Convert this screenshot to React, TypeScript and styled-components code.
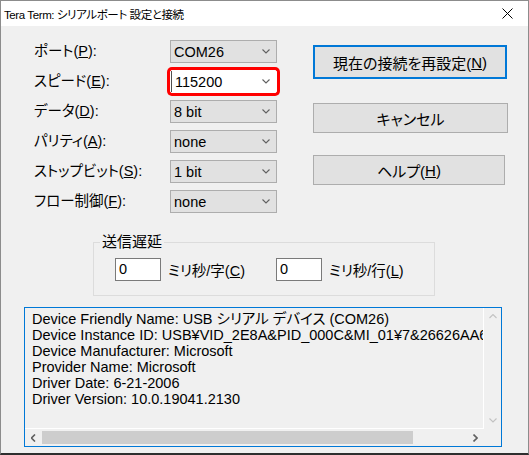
import React from 'react';
import styled, { createGlobalStyle, css } from 'styled-components';

const GlobalStyle = createGlobalStyle`
  html, body { margin: 0; padding: 0; background: #ffffff; }
  body { font-family: "Liberation Sans", "Noto Sans CJK JP", sans-serif; color: #000; }
  * { box-sizing: border-box; }
`;

const Window = styled.div`
  width: 529px;
  height: 455px;
  border: 1px solid #8c8c8c;
  border-bottom: 2px solid #2e2e2e;
  background: #f0f0f0;
  display: flex;
  flex-direction: column;
  overflow: hidden;
`;

const TitleBar = styled.div`
  height: 25px;
  flex: none;
  background: #ffffff;
  display: flex;
  align-items: center;
  justify-content: space-between;
  padding: 0 15px 0 3px;
  font-size: 11.5px;
  letter-spacing: -0.4px;
  font-feature-settings: "palt";
`;

const Body = styled.div`
  padding-top: 14px;
  display: flex;
  flex-direction: column;
`;

const TopSection = styled.div`
  display: flex;
  align-items: flex-start;
  margin-left: 33px;
`;

const FormGrid = styled.div`
  display: grid;
  grid-template-columns: 136px 107px;
  row-gap: 7px;
  align-items: center;
`;

const Label = styled.div`
  font-size: 14.5px;
  line-height: 23px;
  white-space: nowrap;
  font-feature-settings: "palt";
`;

const Combo = styled.div<{ $active?: boolean }>`
  height: 23px;
  width: 107px;
  display: flex;
  align-items: center;
  justify-content: space-between;
  padding: 0 6px 0 3px;
  font-size: 14.5px;
  border: 1px solid #adadad;
  background: #e1e1e1;
  ${(p) =>
    p.$active &&
    css`
      background: #ffffff;
      border-color: #ffffff;
      border-radius: 2px;
      padding-left: 0;
      box-shadow: 0 0 0 3px #ff0000;
    `}
`;

const ComboText = styled.span`
  display: flex;
  align-items: center;
  flex: 1;
`;

const Caret = styled.span`
  width: 1px;
  height: 21px;
  background: #505050;
  margin-right: 3px;
`;

const ButtonColumn = styled.div`
  display: flex;
  flex-direction: column;
  margin-left: 36px;
`;

const DlgButton = styled.div<{ $w: number; $h: number; $mt: number; $primary?: boolean }>`
  width: ${(p) => p.$w}px;
  height: ${(p) => p.$h}px;
  margin-top: ${(p) => p.$mt}px;
  display: flex;
  align-items: center;
  justify-content: center;
  background: #e1e1e1;
  border: ${(p) => (p.$primary ? '2px solid #0078d7' : '1px solid #adadad')};
  font-size: 15px;
  font-feature-settings: "palt";
  white-space: nowrap;
`;

const Group = styled.fieldset`
  margin: 21px 0 0 92px;
  width: 342px;
  border: 1px solid #dcdcdc;
  padding: 0 0 14px 6px;
  min-width: 0;
`;

const Legend = styled.legend`
  font-size: 15px;
  line-height: 16px;
  padding: 0 2px;
`;

const DelayRow = styled.div`
  display: grid;
  grid-template-columns: 46px 101px 46px auto;
  column-gap: 7px;
  align-items: center;
  margin: 8px 0 0 15px;
`;

const NumInput = styled.div`
  width: 46px;
  height: 23px;
  background: #ffffff;
  border: 1px solid #7a7a7a;
  font-size: 14.5px;
  line-height: 21px;
  padding-left: 3px;
`;

const DelayLabel = styled.span`
  font-size: 14.5px;
  white-space: nowrap;
  font-feature-settings: "palt";
`;

const InfoBox = styled.div`
  margin: 11px 0 0 23px;
  width: 478px;
  height: 140px;
  border: 1px solid #0078d7;
  display: grid;
  grid-template-columns: 1fr 17px;
  grid-template-rows: 1fr 17px;
`;

const InfoText = styled.div`
  padding: 3px 0 0 7px;
  font-size: 14.5px;
  line-height: 16px;
  white-space: nowrap;
  overflow: hidden;
  border-right: 1px solid #ffffff;
  border-bottom: 1px solid #ffffff;
  font-feature-settings: "palt";
`;

const VScroll = styled.div`
  display: flex;
  flex-direction: column;
  justify-content: space-between;
  align-items: center;
  padding: 6px 0 6px 0;
`;

const HScroll = styled.div`
  display: flex;
  align-items: center;
`;

const ArrowBox = styled.div`
  width: 17px;
  height: 17px;
  flex: none;
  display: flex;
  align-items: center;
  justify-content: center;
`;

const Track = styled.div`
  flex: 1;
  height: 17px;
  display: flex;
  align-items: center;
`;

const Thumb = styled.div`
  height: 13px;
  background: #cdcdcd;
`;

const Corner = styled.div`
  background: #f0f0f0;
`;

const Chevron = ({ dir, color }: { dir: 'up' | 'down' | 'left' | 'right'; color: string }) => {
  const pts: Record<string, string> = {
    down: '0.5,0.5 4,4 7.5,0.5',
    up: '0.5,4 4,0.5 7.5,4',
    left: '4,0.5 0.5,4 4,7.5',
    right: '0.5,0.5 4,4 0.5,7.5',
  };
  const horiz = dir === 'left' || dir === 'right';
  return (
    <svg width={horiz ? 5 : 8} height={horiz ? 8 : 5} viewBox={horiz ? '0 0 5 8' : '0 0 8 5'}>
      <polyline points={pts[dir]} fill="none" stroke={color} strokeWidth={horiz ? 1.6 : 1.1} />
    </svg>
  );
};

const CloseIcon = () => (
  <svg width="11" height="11" viewBox="0 0 11 11">
    <line x1="0.5" y1="0.5" x2="10.5" y2="10.5" stroke="#000" strokeWidth="1" />
    <line x1="10.5" y1="0.5" x2="0.5" y2="10.5" stroke="#000" strokeWidth="1" />
  </svg>
);

const rows: { label: React.ReactNode; value: string; active?: boolean }[] = [
  { label: <>ポート(<u>P</u>):</>, value: 'COM26' },
  { label: <>スピード(<u>E</u>):</>, value: '115200', active: true },
  { label: <>データ(<u>D</u>):</>, value: '8 bit' },
  { label: <>パリティ(<u>A</u>):</>, value: 'none' },
  { label: <>ストップビット(<u>S</u>):</>, value: '1 bit' },
  { label: <>フロー制御(<u>F</u>):</>, value: 'none' },
];

const infoLines = [
  'Device Friendly Name: USB シリアル デバイス (COM26)',
  'Device Instance ID: USB¥VID_2E8A&PID_000C&MI_01¥7&26626AA6&0&0001',
  'Device Manufacturer: Microsoft',
  'Provider Name: Microsoft',
  'Driver Date: 6-21-2006',
  'Driver Version: 10.0.19041.2130',
];

export default function App() {
  return (
    <>
      <GlobalStyle />
      <Window>
        <TitleBar>
          <span>Tera Term: シリアルポート 設定と接続</span>
          <CloseIcon />
        </TitleBar>
        <Body>
          <TopSection>
            <FormGrid>
              {rows.map((r, i) => (
                <React.Fragment key={i}>
                  <Label>{r.label}</Label>
                  <Combo $active={r.active}>
                    <ComboText>
                      {r.active && <Caret />}
                      {r.value}
                    </ComboText>
                    <Chevron dir="down" color="#606060" />
                  </Combo>
                </React.Fragment>
              ))}
            </FormGrid>
            <ButtonColumn>
              <DlgButton $w={194} $h={34} $mt={5} $primary>
                現在の接続を再設定(<u>N</u>)
              </DlgButton>
              <DlgButton $w={195} $h={30} $mt={24}>
                キャンセル
              </DlgButton>
              <DlgButton $w={192} $h={30} $mt={22}>
                ヘルプ(<u>H</u>)
              </DlgButton>
            </ButtonColumn>
          </TopSection>
          <Group>
            <Legend>送信遅延</Legend>
            <DelayRow>
              <NumInput>0</NumInput>
              <DelayLabel>
                ミリ秒/字(<u>C</u>)
              </DelayLabel>
              <NumInput>0</NumInput>
              <DelayLabel>
                ミリ秒/行(<u>L</u>)
              </DelayLabel>
            </DelayRow>
          </Group>
          <InfoBox>
            <InfoText>
              {infoLines.map((l, i) => (
                <div key={i}>{l}</div>
              ))}
            </InfoText>
            <VScroll>
              <Chevron dir="up" color="#c2c2c2" />
              <Chevron dir="down" color="#c2c2c2" />
            </VScroll>
            <HScroll>
              <ArrowBox>
                <Chevron dir="left" color="#606060" />
              </ArrowBox>
              <Track>
                <Thumb style={{ width: `${(369 / 423) * 100}%` }} />
              </Track>
              <ArrowBox>
                <Chevron dir="right" color="#606060" />
              </ArrowBox>
            </HScroll>
            <Corner />
          </InfoBox>
        </Body>
      </Window>
    </>
  );
}
